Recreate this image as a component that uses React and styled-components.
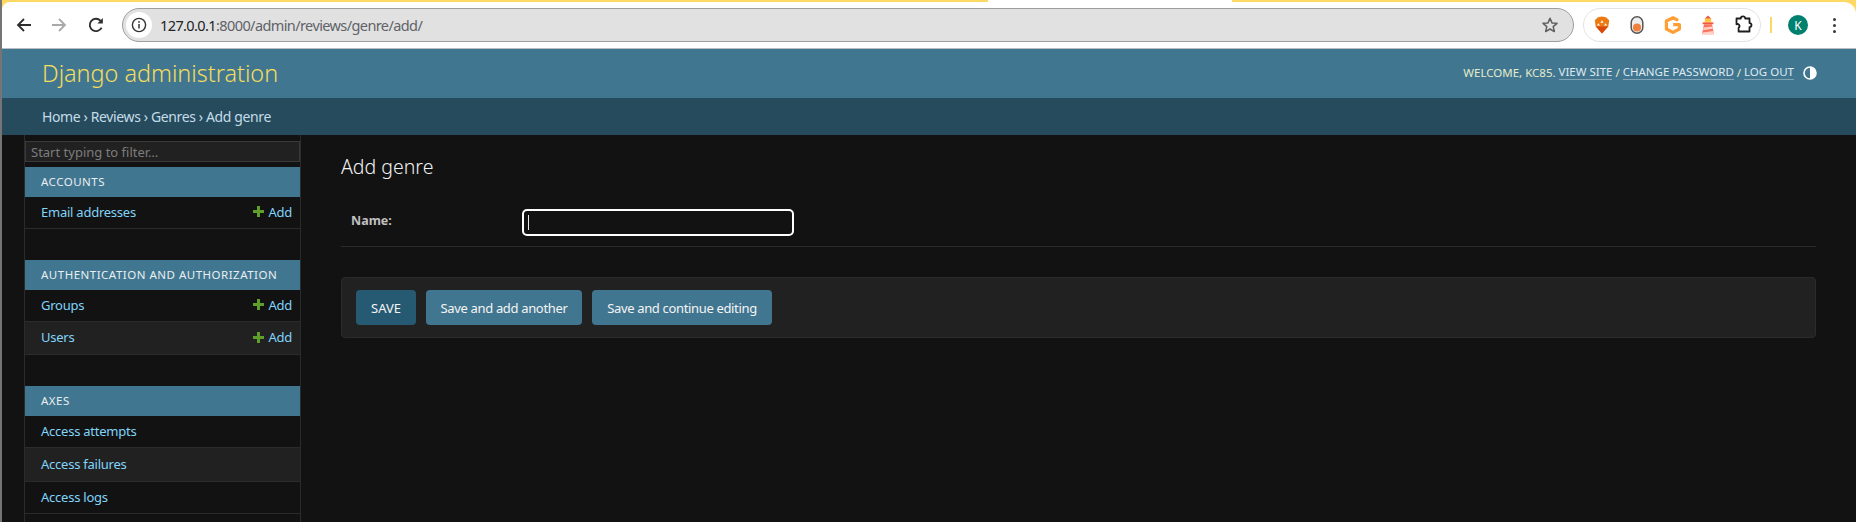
import React from 'react';
import styled, { createGlobalStyle } from 'styled-components';

const GlobalStyle = createGlobalStyle`
  html, body {
    margin: 0;
    height: 522px;
    overflow: hidden;
    background: #121212;
  }
  * { box-sizing: border-box; }
`;

const uiFont = `"Noto Sans", "Open Sans", sans-serif`;

const Page = styled.div`
  width: 1856px;
  height: 522px;
  overflow: hidden;
  display: flex;
  flex-direction: column;
  padding-left: 2px;
  background: #121212;
  position: relative;
  font-family: ${uiFont};
`;

const EdgeLine = styled.div`
  position: absolute;
  left: 0;
  top: 0;
  bottom: 0;
  width: 2px;
  background: #757575;
`;

const ChromeFrame = styled.div`
  flex: none;
  background: #fdd964;
`;

const TopStrip = styled.div`
  height: 2px;
  display: flex;
`;

const StripGap = styled.div`
  width: 244px;
  margin-left: 986px;
  background: #fff;
`;

const BrowserBar = styled.div`
  height: 47px;
  display: flex;
  align-items: center;
  background: #fff;
  border-radius: 8px 12px 0 0;
  border-bottom: 1px solid #b8c0c4;
`;

const NavButton = styled.div`
  width: 20px;
  height: 20px;
  flex: none;
  margin-left: ${(p) => p.$left}px;
  color: ${(p) => (p.$off ? '#a9a9a9' : '#2e2e2e')};
  display: flex;
  align-items: center;
  justify-content: center;
`;

const AddressBar = styled.div`
  width: 1452px;
  height: 34px;
  margin-left: 16px;
  flex: none;
  display: flex;
  align-items: center;
  background: #e1e1e1;
  border: 1px solid #9e9e9e;
  border-radius: 17px;
  padding: 0 14px 0 3px;
`;

const SiteInfo = styled.div`
  width: 26px;
  height: 26px;
  flex: none;
  border-radius: 50%;
  background: #fff;
  display: flex;
  align-items: center;
  justify-content: center;
  color: #333;
`;

const Url = styled.div`
  margin-left: 8px;
  flex: 1;
  font-size: 14.5px;
  color: #5f6368;
  letter-spacing: -0.6px;
  white-space: nowrap;
  strong {
    font-weight: 400;
    color: #202124;
  }
`;

const ExtensionPill = styled.div`
  width: 178px;
  height: 34px;
  flex: none;
  margin-left: 9px;
  border: 1px solid #e3e3e3;
  border-radius: 17px;
  display: flex;
  align-items: center;
  justify-content: space-between;
  padding: 0 7px 0 8px;
`;

const ExtSlot = styled.div`
  width: 20px;
  height: 20px;
  display: flex;
  align-items: center;
  justify-content: center;
`;

const BarDivider = styled.div`
  width: 2px;
  height: 16px;
  margin-left: 9px;
  flex: none;
  background: #fdd964;
`;

const Avatar = styled.div`
  width: 20px;
  height: 20px;
  margin-left: 16px;
  flex: none;
  border-radius: 50%;
  background: #00806e;
  color: #fff;
  font-size: 12px;
  display: flex;
  align-items: center;
  justify-content: center;
`;

const Kebab = styled.div`
  margin-left: 25px;
  flex: none;
  display: flex;
  flex-direction: column;
  gap: 3px;
  span {
    width: 3px;
    height: 3px;
    border-radius: 50%;
    background: #3a3a3a;
  }
`;

const Header = styled.header`
  height: 49px;
  flex: none;
  display: flex;
  align-items: center;
  justify-content: space-between;
  padding: 0 40px;
  background: #417690;
`;

const Branding = styled.h1`
  margin: 1px 0 0;
  font-size: 23.4px;
  font-weight: 300;
  color: #f5dd5d;
  line-height: 1;
`;

const UserTools = styled.div`
  display: flex;
  align-items: center;
  font-size: 11.5px;
  color: #e4eccb;
  white-space: pre;
  margin-bottom: 2px;
  margin-right: -1px;
`;

const ToolLink = styled.a`
  color: #dfeaf0;
  border-bottom: 1px solid rgba(255, 255, 255, 0.35);
  line-height: 14px;
`;

const ThemeToggle = styled.div`
  margin-left: 9px;
  width: 14px;
  height: 14px;
  display: flex;
`;

const Breadcrumbs = styled.div`
  height: 37px;
  flex: none;
  display: flex;
  align-items: center;
  padding: 0 40px;
  background: #264b5d;
  color: #c4dce8;
  font-size: 14px;
  letter-spacing: -0.38px;
  white-space: pre;
`;

const Body = styled.div`
  flex: 1;
  display: flex;
  min-height: 0;
  background: #121212;
`;

const Sidebar = styled.nav`
  width: 277px;
  margin-left: 22px;
  flex: none;
  border-left: 1px solid #2b2b2b;
  border-right: 1px solid #2b2b2b;
  padding-top: 6px;
  overflow: hidden;
`;

const Filter = styled.input`
  display: block;
  width: 100%;
  height: 21px;
  margin-bottom: 5px;
  padding: 0 5px;
  border: 1px solid #3a3a3a;
  background: #212121;
  color: #fff;
  font-family: ${uiFont};
  font-size: 13px;
  outline: none;
  &::placeholder {
    color: #7d7d7d;
    opacity: 1;
  }
`;

const AppModule = styled.section`
  margin-bottom: 31px;
`;

const Caption = styled.div`
  height: 30px;
  display: flex;
  align-items: center;
  padding: 0 0 2px 16px;
  background: #417690;
  color: #e8eef1;
  font-size: 11.5px;
  letter-spacing: 0.5px;
`;

const ModelRow = styled.div`
  height: ${(p) => p.$height || 32}px;
  display: flex;
  align-items: center;
  justify-content: space-between;
  padding: 0 8px 2px 16px;
  background: ${(p) => (p.$alt ? '#212121' : '#121212')};
  border-bottom: 1px solid #2b2b2b;
  font-size: 13px;
  letter-spacing: -0.24px;
`;

const ModelLink = styled.a`
  color: #81d4fa;
`;

const AddLink = styled.a`
  display: flex;
  align-items: center;
  gap: 4px;
  color: #81d4fa;
`;

const Content = styled.main`
  flex: 1;
  min-width: 0;
  padding: 0 40px;
`;

const Title = styled.h1`
  margin: 0;
  padding-top: 18px;
  height: 74px;
  font-size: 19.5px;
  font-weight: 300;
  line-height: 27px;
  color: #f1f1f1;
`;

const FormRow = styled.div`
  height: 38px;
  display: flex;
  border-bottom: 1px solid #2b2b2b;
`;

const FieldLabel = styled.label`
  width: 181px;
  padding: 2px 0 0 10px;
  flex: none;
  font-size: 12.5px;
  font-weight: 700;
  line-height: 20px;
  color: #c0c0c0;
`;

const TextBox = styled.div`
  position: relative;
  width: 272px;
  height: 27px;
`;

const TextInput = styled.input`
  width: 100%;
  height: 100%;
  background: #121212;
  border: 2px solid #fff;
  border-radius: 5px;
  outline: none;
  padding: 0 6px;
  color: #fff;
`;

const Caret = styled.span`
  position: absolute;
  left: 6px;
  top: 6px;
  width: 1px;
  height: 15px;
  background: #e8e8e8;
`;

const SubmitRow = styled.div`
  margin-top: 30px;
  height: 61px;
  display: flex;
  align-items: center;
  gap: 10px;
  padding: 0 14px;
  background: #212121;
  border: 1px solid #2b2b2b;
  border-radius: 4px;
`;

const SubmitButton = styled.button`
  width: ${(p) => p.$width}px;
  height: 35px;
  padding: 0;
  border: 0;
  border-radius: 4px;
  background: ${(p) => (p.$primary ? '#265a73' : '#417690')};
  color: #f4f4f4;
  font-family: ${uiFont};
  font-size: 13px;
  letter-spacing: ${(p) => (p.$primary ? '0' : '-0.34px')};
  white-space: nowrap;
`;

const modules = [
  {
    name: 'ACCOUNTS',
    models: [{ name: 'Email addresses', add: true }],
  },
  {
    name: 'AUTHENTICATION AND AUTHORIZATION',
    models: [
      { name: 'Groups', add: true },
      { name: 'Users', add: true, height: 33 },
    ],
  },
  {
    name: 'AXES',
    models: [
      { name: 'Access attempts' },
      { name: 'Access failures', height: 34 },
      { name: 'Access logs' },
    ],
  },
];

const Glyph = ({ size = 20, children, ...rest }) => (
  <svg width={size} height={size} viewBox="0 0 20 20" fill="none" {...rest}>
    {children}
  </svg>
);

const ArrowLeft = () => (
  <Glyph>
    <path d="M17 10H4.5M10 4l-6 6 6 6" stroke="currentColor" strokeWidth="1.8" />
  </Glyph>
);

const ArrowRight = () => (
  <Glyph>
    <path d="M3 10h12.5M10 4l6 6-6 6" stroke="currentColor" strokeWidth="1.8" />
  </Glyph>
);

const Reload = () => (
  <Glyph>
    <path d="M15.6 12.6A6.2 6.2 0 1 1 14.4 5.6L16 7.2" stroke="currentColor" strokeWidth="1.8" />
    <path d="M16.8 3v5.4h-5.4z" fill="currentColor" />
  </Glyph>
);

const InfoIcon = () => (
  <Glyph size={16} viewBox="0 0 16 16">
    <circle cx="8" cy="8" r="6.6" stroke="currentColor" strokeWidth="1.4" />
    <path d="M8 7v4.4" stroke="currentColor" strokeWidth="1.5" />
    <circle cx="8" cy="4.9" r="0.9" fill="currentColor" />
  </Glyph>
);

const StarIcon = () => (
  <Glyph size={18} viewBox="0 0 18 18" style={{ color: '#5f5f5f' }}>
    <path
      d="M9 2.3l2 4.6 5 .45-3.8 3.3 1.15 4.9L9 13l-4.35 2.55 1.15-4.9L2 7.35l5-.45z"
      stroke="currentColor"
      strokeWidth="1.5"
      strokeLinejoin="round"
    />
  </Glyph>
);

const BraveIcon = () => (
  <Glyph>
    <path d="M10 1.5l4 .7 3.2 3-.9 6.3-6.3 7-6.3-7-.9-6.3 3.2-3z" fill="#ec7a12" />
    <path d="M3.9 11.5L10 18.5l6.1-7z" fill="#d9480f" />
    <path d="M10 5.3l1.6 2.4h-3.2zM6.4 8.2l1.6 2.3H4.8zM13.6 8.2l1.6 2.3h-3.2z" fill="#fff" />
  </Glyph>
);

const ToggleIcon = () => (
  <Glyph>
    <rect x="4.2" y="1.8" width="11.6" height="16.4" rx="5.8" fill="#eee" stroke="#555" strokeWidth="1.5" />
    <circle cx="10" cy="12.4" r="4" fill="#f0803c" />
  </Glyph>
);

const GIcon = () => (
  <Glyph>
    <path
      d="M15.2 5.4L10 2.8 3.4 6v8l6.6 3.4 6.4-3.4V9.6h-6.2"
      stroke="#ff9f33"
      strokeWidth="3.2"
      strokeLinejoin="round"
    />
  </Glyph>
);

const LighthouseIcon = () => (
  <Glyph>
    <path d="M10 0.6l3.4 3.2H6.6z" fill="#f1573f" />
    <rect x="6.8" y="3.8" width="6.4" height="3.6" fill="#ffc93c" />
    <path d="M4.6 7.4h10.8v1.8H4.6z" fill="#f1573f" />
    <path d="M6 9.2h8l2 10H4z" fill="#f8745c" />
    <path d="M5.6 12.6l8.8-1.2.5 2.4-9.8 1.4zM4.6 17.6l10.8-1.6.6 3.2H4z" fill="#ffd0c4" />
  </Glyph>
);

const PuzzleIcon = () => (
  <Glyph>
    <path
      d="M3.5 3.5h4.3a2.2 2.2 0 0 1 4.4 0h4.3v4.6a2 2 0 0 1 0 4v4.4H5.6v-3.8a2 2 0 0 0-2.1-3.4z"
      stroke="#1f1f1f"
      strokeWidth="1.8"
      strokeLinejoin="round"
    />
  </Glyph>
);

const HalfCircle = () => (
  <Glyph size={14} viewBox="0 0 14 14">
    <circle cx="7" cy="7" r="6" stroke="#fff" strokeWidth="1.6" />
    <path d="M7 1a6 6 0 0 1 0 12z" fill="#fff" />
  </Glyph>
);

const PlusIcon = () => (
  <Glyph size={11} viewBox="0 0 11 11">
    <path d="M4 0h3v4h4v3H7v4H4V7H0V4h4z" fill="#5f9e2a" />
  </Glyph>
);

const BrowserChrome = () => (
  <ChromeFrame>
    <TopStrip><StripGap /></TopStrip>
    <BrowserBar>
      <NavButton $left={12}><ArrowLeft /></NavButton>
      <NavButton $left={15} $off><ArrowRight /></NavButton>
      <NavButton $left={17}><Reload /></NavButton>
      <AddressBar>
        <SiteInfo><InfoIcon /></SiteInfo>
        <Url><strong>127.0.0.1</strong>:8000/admin/reviews/genre/add/</Url>
        <StarIcon />
      </AddressBar>
      <ExtensionPill>
        <ExtSlot><BraveIcon /></ExtSlot>
        <ExtSlot><ToggleIcon /></ExtSlot>
        <ExtSlot><GIcon /></ExtSlot>
        <ExtSlot><LighthouseIcon /></ExtSlot>
        <ExtSlot><PuzzleIcon /></ExtSlot>
      </ExtensionPill>
      <BarDivider />
      <Avatar>K</Avatar>
      <Kebab><span /><span /><span /></Kebab>
    </BrowserBar>
  </ChromeFrame>
);

const App = () => (
  <Page>
    <GlobalStyle />
    <EdgeLine />
    <BrowserChrome />
    <Header>
      <Branding>Django administration</Branding>
      <UserTools>
        WELCOME, KC85. <ToolLink>VIEW SITE</ToolLink> / <ToolLink>CHANGE PASSWORD</ToolLink> / <ToolLink>LOG OUT</ToolLink>
        <ThemeToggle><HalfCircle /></ThemeToggle>
      </UserTools>
    </Header>
    <Breadcrumbs>Home › Reviews › Genres › Add genre</Breadcrumbs>
    <Body>
      <Sidebar>
        <Filter placeholder="Start typing to filter…" />
        {modules.map((mod) => (
          <AppModule key={mod.name}>
            <Caption>{mod.name}</Caption>
            {mod.models.map((model, i) => (
              <ModelRow key={model.name} $alt={i % 2 === 1} $height={model.height}>
                <ModelLink>{model.name}</ModelLink>
                {model.add && (
                  <AddLink><PlusIcon />Add</AddLink>
                )}
              </ModelRow>
            ))}
          </AppModule>
        ))}
      </Sidebar>
      <Content>
        <Title>Add genre</Title>
        <FormRow>
          <FieldLabel>Name:</FieldLabel>
          <TextBox>
            <TextInput />
            <Caret />
          </TextBox>
        </FormRow>
        <SubmitRow>
          <SubmitButton $primary $width={60}>SAVE</SubmitButton>
          <SubmitButton $width={156}>Save and add another</SubmitButton>
          <SubmitButton $width={180}>Save and continue editing</SubmitButton>
        </SubmitRow>
      </Content>
    </Body>
  </Page>
);

export default App;
